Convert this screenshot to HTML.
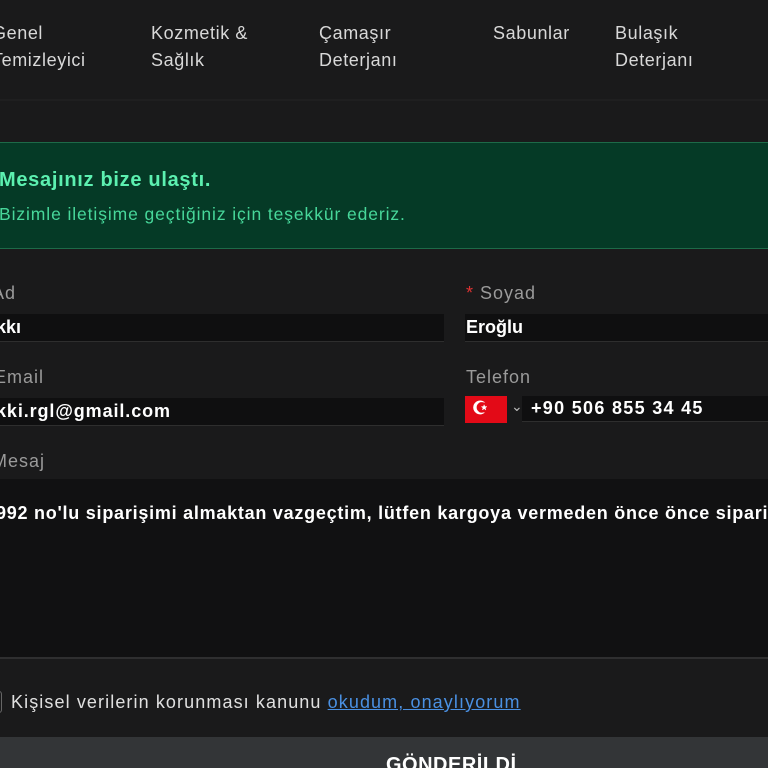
<!DOCTYPE html>
<html><head><meta charset="utf-8"><style>
*{margin:0;padding:0;box-sizing:border-box}
html,body{width:768px;height:768px;overflow:hidden}
body{background:#1a1a1b;font-family:"Liberation Sans",sans-serif;color:#ddd;position:relative}
.a{position:absolute;white-space:nowrap}
.nav{font-size:18px;color:#d8d8d8;line-height:27px;top:20px;letter-spacing:0.6px}
.lbl{font-size:18px;color:#9a9a9a;letter-spacing:1px}
.inp{position:absolute;background:#0f0f10;border-bottom:1px solid #2e2e2e;height:28px}
.val{font-size:18px;color:#fff;font-weight:bold}
</style></head><body>
<div class="a nav" style="left:-8px">Genel<br>Temizleyici</div>
<div class="a nav" style="left:151px">Kozmetik &amp;<br>Sağlık</div>
<div class="a nav" style="left:319px">Çamaşır<br>Deterjanı</div>
<div class="a nav" style="left:493px">Sabunlar</div>
<div class="a nav" style="left:615px">Bulaşık<br>Deterjanı</div>
<div class="a" style="left:0;top:99px;width:768px;height:2px;background:#1f1f20"></div>
<div class="a" style="left:0;top:142px;width:768px;height:107px;background:#053a26;border-top:1px solid #1d6a48;border-bottom:1px solid #1d6a48"></div>
<div class="a" style="left:-1px;top:169px;font-size:20px;font-weight:bold;color:#5cf0b0;letter-spacing:0.7px">Mesajınız bize ulaştı.</div>
<div class="a" style="left:-1px;top:204px;font-size:17.5px;color:#47d79a;letter-spacing:0.9px">Bizimle iletişime geçtiğiniz için teşekkür ederiz.</div>
<div class="a lbl" style="left:-8px;top:283px">Ad</div>
<div class="a lbl" style="left:466px;top:283px"><span style="color:#d33">*</span> Soyad</div>
<div class="inp" style="left:0;top:314px;width:444px"></div>
<div class="inp" style="left:465px;top:314px;width:303px"></div>
<div class="a val" style="left:-4px;top:317px">kkı</div>
<div class="a val" style="left:466px;top:317px">Eroğlu</div>
<div class="a lbl" style="left:-6px;top:367px">Email</div>
<div class="a lbl" style="left:466px;top:367px">Telefon</div>
<div class="inp" style="left:0;top:398px;width:444px"></div>
<div class="a val" style="left:-4px;top:401px;letter-spacing:0.9px">kki.rgl@gmail.com</div>
<div class="a" style="left:465px;top:396px;width:42px;height:27px;background:#e30a17"><span style="position:absolute;left:7px;top:2px;color:#fff;font-size:18px;font-weight:bold">☪</span></div>
<div class="a" style="left:511px;top:398px;font-size:14px;color:#bbb">⌄</div>
<div class="inp" style="left:522px;top:396px;width:246px;height:26px"></div>
<div class="a val" style="left:531px;top:398px;letter-spacing:1.3px">+90 506 855 34 45</div>
<div class="a lbl" style="left:-8px;top:451px">Mesaj</div>
<div class="a" style="left:0;top:479px;width:768px;height:180px;background:#111112;border-bottom:2px solid #2f2f30"></div>
<div class="a val" style="left:-4px;top:503px;letter-spacing:0.75px">992 no'lu siparişimi almaktan vazgeçtim, lütfen kargoya vermeden önce önce siparişi</div>
<div class="a" style="left:-8px;top:691px;width:10px;height:22px;border:1px solid #666;border-radius:3px"></div>
<div class="a" style="left:11px;top:692px;font-size:18px;color:#e0e0e0;letter-spacing:1.1px">Kişisel verilerin korunması kanunu <span style="color:#4a90e2;text-decoration:underline">okudum, onaylıyorum</span></div>
<div class="a" style="left:0;top:737px;width:768px;height:31px;background:#333537"></div>
<div class="a" style="left:386px;top:754px;font-size:20px;font-weight:bold;color:#fff;letter-spacing:0.5px">GÖNDERİLDİ</div>
</body></html>
